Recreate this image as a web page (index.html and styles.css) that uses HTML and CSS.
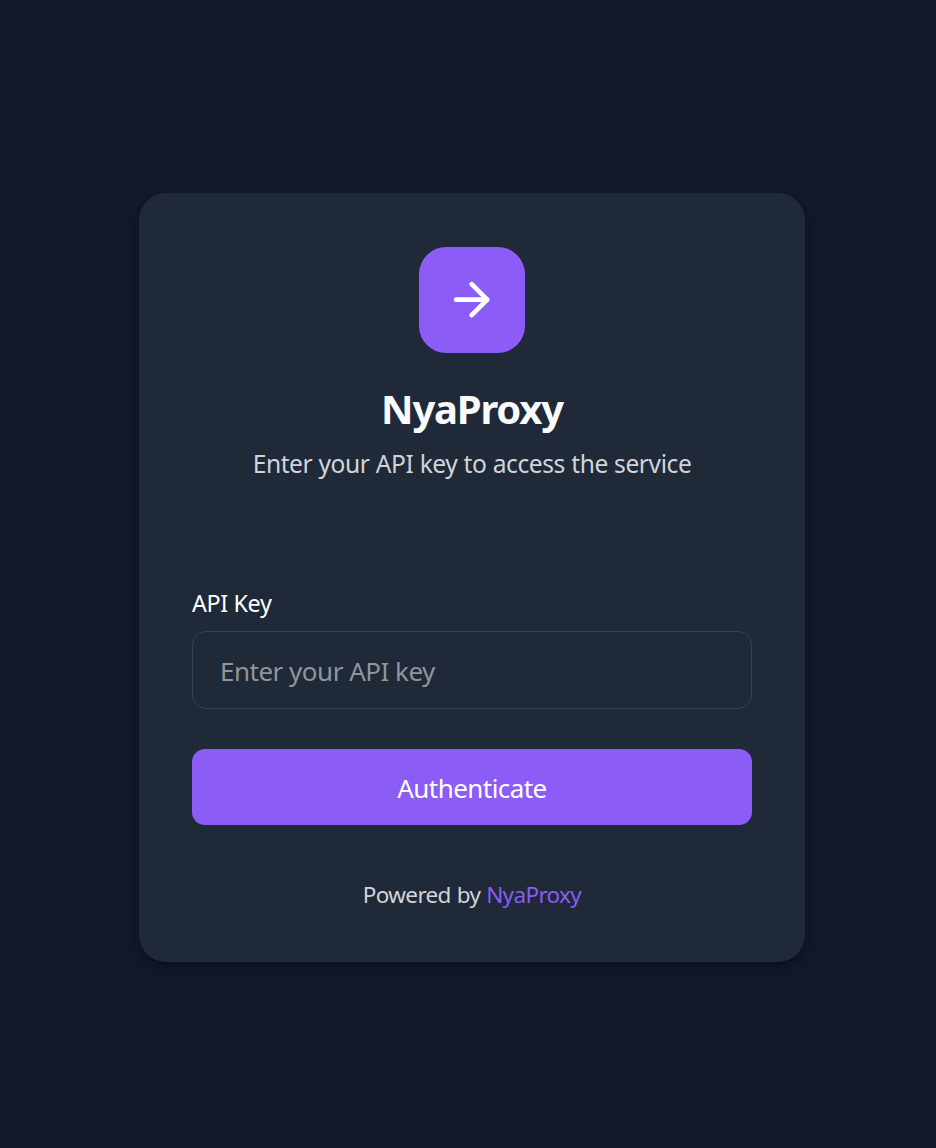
FILE: index.html
```html
<!DOCTYPE html>
<html lang="en">
<head>
<meta charset="utf-8">
<title>NyaProxy</title>
<link rel="stylesheet" href="styles.css">
</head>
<body>
<main class="card">
  <div class="logo">
    <svg class="logo-icon" viewBox="0 0 24 24" fill="none" stroke="currentColor" stroke-width="2.1" stroke-linecap="round" stroke-linejoin="round"><path d="M5 12h14"/><path d="M12 5l7 7-7 7"/></svg>
  </div>
  <h1 class="title">NyaProxy</h1>
  <p class="subtitle">Enter your API key to access the service</p>
  <form class="form">
    <label class="label" for="key">API Key</label>
    <input class="input" id="key" type="text" placeholder="Enter your API key">
    <button class="button" type="button">Authenticate</button>
  </form>
  <p class="footer">Powered by <a class="link" href="#">NyaProxy</a></p>
</main>
</body>
</html>
```
FILE: styles.css
```css
* { box-sizing: border-box; margin: 0; padding: 0; }
body {
  min-height: 1148px;
  background: #111827;
  color: #fff;
  font-family: "Noto Sans", "Open Sans", sans-serif;
  padding: 193px 0 0 139px;
}
.card {
  width: 666px;
  height: 769px;
  padding: 54px 53px 0;
  border-radius: 27px;
  background: #1f2937;
  box-shadow: 0 7px 10px -2px rgba(0,0,0,.2), 0 3px 7px -2px rgba(0,0,0,.2);
  display: flex;
  flex-direction: column;
}
.logo {
  align-self: center;
  width: 106px;
  height: 106px;
  border-radius: 27px;
  background: #8b5cf6;
  display: grid;
  place-items: center;
}
.logo-icon { width: 53.3px; height: 53.3px; }
.title {
  margin-top: 31px;
  text-align: center;
  font-size: 40px;
  line-height: 50px;
  font-weight: 700;
  letter-spacing: -1.2px;
  color: #f9fafb;
}
.subtitle {
  margin-top: 12px;
  text-align: center;
  font-size: 24.6px;
  line-height: 36px;
  letter-spacing: -.44px;
  word-spacing: .3px;
  color: #d1d5db;
}
.form { display: flex; flex-direction: column; margin-top: 106px; }
.label { font-size: 23.3px; line-height: 30px; letter-spacing: -.35px; }
.input {
  height: 78px;
  margin-top: 13px;
  padding: 2px 27px 0;
  border: 1px solid #374151;
  border-radius: 14px;
  background: transparent;
  color: #fff;
  font: 26px "Noto Sans", "Open Sans", sans-serif;
  letter-spacing: -.5px;
}
.input::placeholder { color: #8f959b; opacity: 1; }
.button {
  height: 76px;
  margin-top: 40px;
  padding-top: 1px;
  border: 0;
  border-radius: 13px;
  background: #8b5cf6;
  color: #fff;
  font: 26px "Noto Sans", "Open Sans", sans-serif;
  letter-spacing: -.55px;
}
.footer {
  margin-top: 54px;
  text-align: center;
  font-size: 22.5px;
  line-height: 32px;
  letter-spacing: -.65px;
  word-spacing: .7px;
  color: #d1d5db;
}
.link { color: #8b5cf6; text-decoration: none; }
```
